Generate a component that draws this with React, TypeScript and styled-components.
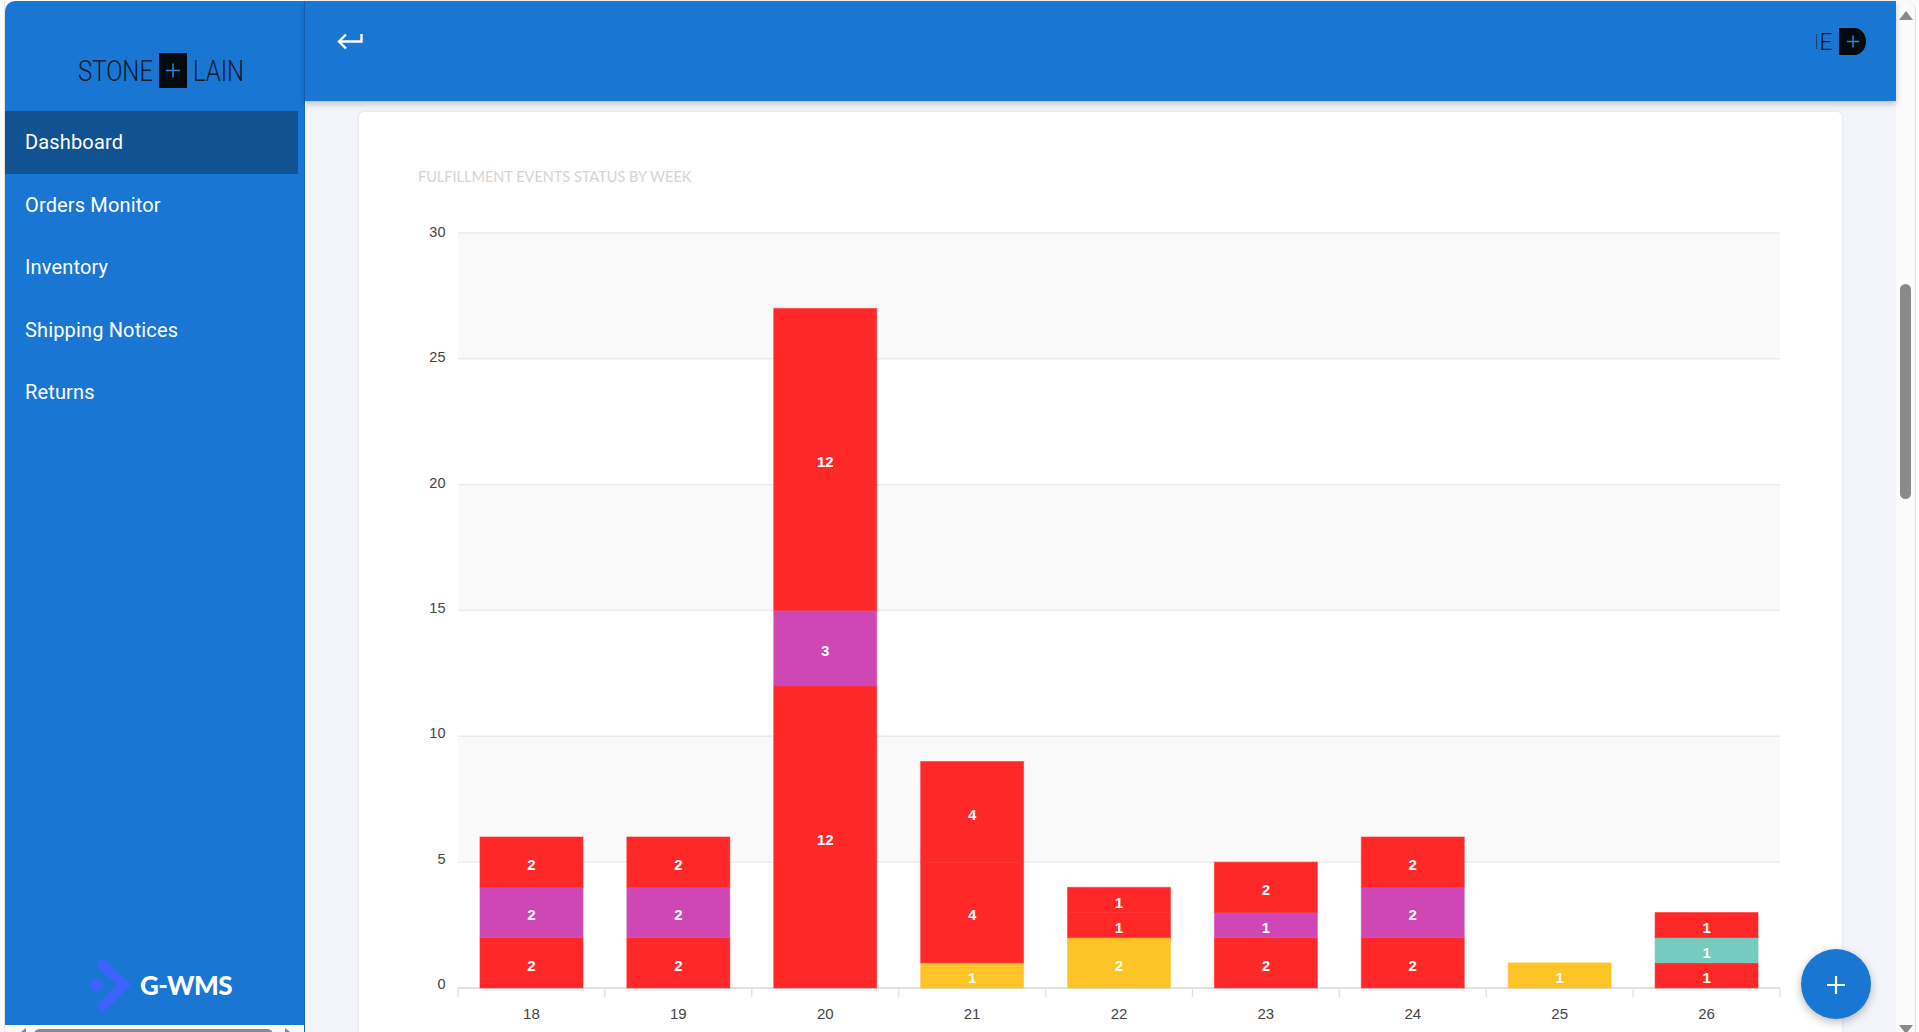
import React from "react";
import styled, { createGlobalStyle } from "styled-components";

const Global = createGlobalStyle`
  html, body { margin: 0; padding: 0; background: #fbfbfb; overflow: hidden; }
  * { box-sizing: border-box; }
`;

const Shell = styled.div`
  width: 1919px;
  height: 1032px;
  display: flex;
  padding-top: 1px;
  overflow: hidden;
  position: relative;
  background: #fbfbfb;
  font-family: Roboto, sans-serif;
`;

const Gutter = styled.div`
  width: 5px;
  flex: none;
  border-right: 1px solid #e4e4e4;
`;

const SideColumn = styled.div`
  width: 300px;
  flex: none;
  display: flex;
  flex-direction: column;
  background: #fbfbfb;
  border-right: 1px solid #1565c0;
`;

const Sidebar = styled.aside`
  flex: 1;
  display: flex;
  flex-direction: column;
  background: #1976d2;
  border-top-left-radius: 10px;
  min-height: 0;
`;

const BrandSlot = styled.div`
  height: 110px;
  flex: none;
  padding: 51px 0 0 67px;
`;

const Menu = styled.nav`
  display: flex;
  flex-direction: column;
`;

const MenuItem = styled.a<{ $active?: boolean }>`
  width: 293px;
  height: 62.5px;
  display: flex;
  align-items: center;
  padding-left: 20px;
  color: #fff;
  font-size: 20px;
  letter-spacing: 0.15px;
  font-weight: 400;
  background: ${(p) => (p.$active ? "#115293" : "transparent")};
`;

const SidebarFoot = styled.div`
  margin-top: auto;
  height: 78px;
  display: flex;
  align-items: flex-start;
  gap: 7px;
  padding: 11px 0 0 83px;
`;

const FootName = styled.span`
  font-family: Lato, sans-serif;
  font-weight: 900;
  font-size: 26px;
  letter-spacing: -0.5px;
  line-height: 54px;
  color: #fff;
`;

const HScroll = styled.div`
  height: 7px;
  flex: none;
  display: flex;
  align-items: flex-start;
  padding: 4px 0 0 12px;
  background: #fbfbfb;
`;

const HArrowLeft = styled.i`
  width: 0;
  height: 0;
  margin-top: -1px;
  border-top: 7px solid transparent;
  border-bottom: 7px solid transparent;
  border-right: 9px solid #8a8a8a;
`;

const HThumb = styled.i`
  width: 239px;
  height: 11px;
  margin-left: 8px;
  border-radius: 6px;
  background: #8a8a8a;
`;

const HArrowRight = styled.i`
  width: 0;
  height: 0;
  margin: -1px 0 0 12px;
  border-top: 7px solid transparent;
  border-bottom: 7px solid transparent;
  border-left: 9px solid #8a8a8a;
`;

const Main = styled.div`
  width: 1591px;
  flex: none;
  display: flex;
  flex-direction: column;
  background: #f4f5fa;
`;

const TopBar = styled.header`
  height: 100px;
  flex: none;
  position: relative;
  z-index: 2;
  display: flex;
  align-items: flex-start;
  justify-content: space-between;
  padding: 31px 30px 0 32px;
  background: #1976d2;
  box-shadow: 0 3px 6px rgba(0, 0, 0, 0.22);
`;

const BarLogo = styled.div`
  width: 50px;
  height: 27px;
  margin-top: -4px;
  overflow: hidden;
  border-radius: 0 12px 12px 0 / 0 14px 14px 0;
`;

const Content = styled.main`
  flex: 1;
  padding: 11px 54px 0;
  min-height: 0;
  overflow: hidden;
`;

const Card = styled.section`
  height: 1000px;
  padding: 54px 0 0 59px;
  background: #fff;
  border-radius: 5px;
  box-shadow: 0 0 3px rgba(0, 0, 0, 0.12);
`;

const CardTitle = styled.h2`
  margin: 0 0 21px;
  height: 22px;
  font-family: Lato, sans-serif;
  font-size: 14.5px;
  font-weight: 400;
  line-height: 22px;
  color: #d6d4d2;
`;

const ChartSvg = styled.svg`
  display: block;
`;

const VScroll = styled.div`
  width: 20px;
  flex: none;
  display: flex;
  flex-direction: column;
  align-items: center;
  padding-top: 10px;
  background: #fbfbfb;
  border-right: 1px solid #e2e2e2;
  border-top-right-radius: 10px;
`;

const VArrowUp = styled.i`
  width: 0;
  height: 0;
  border-left: 7px solid transparent;
  border-right: 7px solid transparent;
  border-bottom: 9px solid #8a8a8a;
`;

const VThumb = styled.i`
  width: 11px;
  height: 215px;
  margin-top: 264px;
  border-radius: 6px;
  background: #8a8a8a;
`;

const VArrowDown = styled.i`
  width: 0;
  height: 0;
  margin-top: auto;
  margin-bottom: -2px;
  border-left: 7px solid transparent;
  border-right: 7px solid transparent;
  border-top: 9px solid #8a8a8a;
`;

const Fab = styled.button`
  position: absolute;
  left: 1801px;
  top: 949px;
  width: 70px;
  height: 70px;
  padding: 0;
  border: 0;
  border-radius: 50%;
  display: flex;
  align-items: center;
  justify-content: center;
  background: #1976d2;
  box-shadow: 0 3px 10px rgba(0, 0, 0, 0.28);
`;

const NAV = ["Dashboard", "Orders Monitor", "Inventory", "Shipping Notices", "Returns"];

const RED = "#ff2828";
const PURPLE = "#cf47b5";
const YELLOW = "#fdc428";
const TEAL = "#76cbc0";

type Seg = [number, string];
const WEEKS: { week: number; segs: Seg[] }[] = [
  { week: 18, segs: [[2, RED], [2, PURPLE], [2, RED]] },
  { week: 19, segs: [[2, RED], [2, PURPLE], [2, RED]] },
  { week: 20, segs: [[12, RED], [3, PURPLE], [12, RED]] },
  { week: 21, segs: [[1, YELLOW], [4, RED], [4, RED]] },
  { week: 22, segs: [[2, YELLOW], [1, RED], [1, RED]] },
  { week: 23, segs: [[2, RED], [1, PURPLE], [2, RED]] },
  { week: 24, segs: [[2, RED], [2, PURPLE], [2, RED]] },
  { week: 25, segs: [[1, YELLOW]] },
  { week: 26, segs: [[1, RED], [1, TEAL], [1, RED]] },
];

// Chart space: svg origin sits at page (418, 209).
const OX = 418;
const OY = 209;
const X0 = 458 - OX;
const X1 = 1780 - OX;
const Y0 = 988 - OY;
const UNIT = 25.17;
const CAT = (X1 - X0) / 9;
const BAR = 103;
const yOf = (v: number) => Y0 - v * UNIT;

const AXIS_FONT = "'Liberation Sans', Arial, sans-serif";

function Chart() {
  return (
    <ChartSvg width={1400} height={830} viewBox="0 0 1400 830">
      {[25, 15, 5].map((v) => (
        <rect key={v} x={X0} y={yOf(v + 5)} width={X1 - X0} height={UNIT * 5} fill="#f9f9f9" />
      ))}
      {[0, 5, 10, 15, 20, 25, 30].map((v) => (
        <g key={v}>
          <line
            x1={X0}
            x2={X1}
            y1={yOf(v)}
            y2={yOf(v)}
            stroke={v === 0 ? "#e0e0e0" : "#e9e9e9"}
            strokeWidth={v === 0 ? 2 : 1.4}
          />
          <text
            x={27.5}
            y={yOf(v) + 1 + v * 0.1}
            textAnchor="end"
            fontFamily={AXIS_FONT}
            fontSize={14.5}
            fill="#444"
          >
            {v}
          </text>
        </g>
      ))}
      {Array.from({ length: 10 }, (_, i) => (
        <line key={i} x1={X0 + i * CAT} x2={X0 + i * CAT} y1={Y0} y2={Y0 + 9} stroke="#e2e2e2" strokeWidth={1.4} />
      ))}
      {WEEKS.map((w, i) => {
        const cx = X0 + (i + 0.5) * CAT;
        let base = 0;
        return (
          <g key={w.week}>
            {w.segs.map(([n, color], j) => {
              const top = yOf(base + n);
              const h = n * UNIT;
              base += n;
              return (
                <g key={j}>
                  <rect
                    x={cx - BAR / 2}
                    y={top}
                    width={BAR}
                    height={h}
                    fill={color}
                    stroke={color}
                    strokeOpacity={0.5}
                    strokeWidth={1}
                  />
                  <text
                    x={cx}
                    y={top + h / 2 + 8}
                    textAnchor="middle"
                    fontFamily={AXIS_FONT}
                    fontSize={15}
                    fontWeight={700}
                    fill="#fff"
                  >
                    {n}
                  </text>
                </g>
              );
            })}
            <text x={cx} y={1019 - OY} textAnchor="middle" fontFamily={AXIS_FONT} fontSize={15} fill="#444">
              {w.week}
            </text>
          </g>
        );
      })}
    </ChartSvg>
  );
}

const LOGO_FONT = "Roboto, sans-serif";
const INK = "#0b1a2b";

function StoneLogo() {
  return (
    <svg width={200} height={36} viewBox="0 0 200 36" style={{ display: "block" }}>
      <text x={6} y={29} fontFamily={LOGO_FONT} fontWeight={300} fontSize={29} fill={INK} textLength={75} lengthAdjust="spacingAndGlyphs">
        STONE
      </text>
      <rect x={87} y={1} width={28} height={35} fill="#050a0e" />
      <path d="M101 11.5v14M94 18.5h14" stroke="#2a86e0" strokeWidth={1.5} fill="none" />
      <text x={121} y={29} fontFamily={LOGO_FONT} fontWeight={300} fontSize={29} fill={INK} textLength={51} lengthAdjust="spacingAndGlyphs">
        LAIN
      </text>
    </svg>
  );
}

function BarLogoMark() {
  return (
    <svg width={50} height={27} viewBox="0 0 50 27" style={{ display: "block" }}>
      <rect x={0} y={6} width={0.7} height={15} fill={INK} opacity={0.7} />
      <text x={3.5} y={22} fontFamily={LOGO_FONT} fontWeight={300} fontSize={24} fill={INK} textLength={13} lengthAdjust="spacingAndGlyphs">
        E
      </text>
      <rect x={23} y={0} width={27} height={27} fill="#050a0e" />
      <path d="M37 7.5v12M31 13.5h12" stroke="#2a86e0" strokeWidth={1.5} fill="none" />
    </svg>
  );
}

export default function App() {
  return (
    <Shell>
      <Global />
      <Gutter />
      <SideColumn>
        <Sidebar>
          <BrandSlot>
            <StoneLogo />
          </BrandSlot>
          <Menu>
            {NAV.map((n, i) => (
              <MenuItem key={n} $active={i === 0}>
                {n}
              </MenuItem>
            ))}
          </Menu>
          <SidebarFoot>
            <svg width={46} height={56} viewBox="0 0 46 56" style={{ flex: "none", marginLeft: -1 }}>
              <circle cx={10} cy={27} r={6.5} fill="#3d63ff" />
              <path d="M16 7 L37 27 L16 48" fill="none" stroke="#3d63ff" strokeWidth={10} strokeLinecap="round" strokeLinejoin="miter" />
            </svg>
            <FootName>G-WMS</FootName>
          </SidebarFoot>
        </Sidebar>
        <HScroll>
          <HArrowLeft />
          <HThumb />
          <HArrowRight />
        </HScroll>
      </SideColumn>
      <Main>
        <TopBar>
          <svg width={26} height={18} viewBox="0 0 26 18" style={{ display: "block" }}>
            <path d="M24.5 2v7.5H3M9 2.5 2 9.5l7 7" fill="none" stroke="#fff" strokeWidth={2.4} />
          </svg>
          <BarLogo>
            <BarLogoMark />
          </BarLogo>
        </TopBar>
        <Content>
          <Card>
            <CardTitle>FULFILLMENT EVENTS STATUS BY WEEK</CardTitle>
            <Chart />
          </Card>
        </Content>
      </Main>
      <VScroll>
        <VArrowUp />
        <VThumb />
        <VArrowDown />
      </VScroll>
      <Fab aria-label="Add">
        <svg width={20} height={20} viewBox="0 0 20 20" style={{ marginTop: 2 }}>
          <path d="M10 1v18M1 10h18" stroke="#fff" strokeWidth={2.2} fill="none" />
        </svg>
      </Fab>
    </Shell>
  );
}
